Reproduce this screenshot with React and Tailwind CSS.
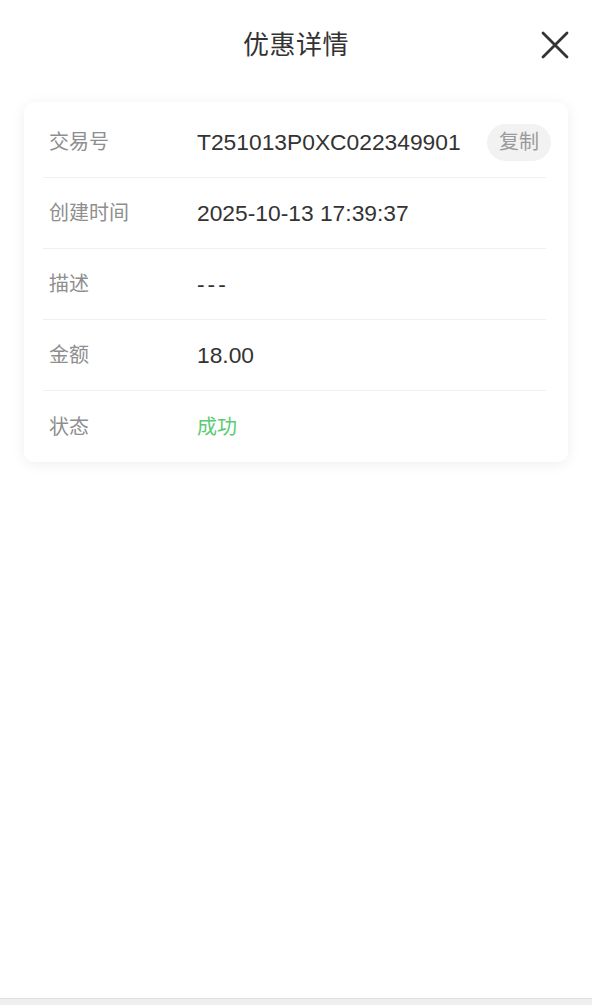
import React from 'react';

const rows = [
    { label: '交易号', value: 'T251013P0XC022349901', copy: true },
    { label: '创建时间', value: '2025-10-13 17:39:37' },
    { label: '描述', value: '---', dash: true },
    { label: '金额', value: '18.00' },
    { label: '状态', value: '成功', success: true },
];

const CloseIcon = () => (
    <svg width="28" height="28" viewBox="0 0 28 28" fill="none">
        <path d="M2 2L26 26M26 2L2 26" stroke="#333" strokeWidth="2.8" strokeLinecap="round" />
    </svg>
);

const App = () => {
    return (
        <div
            className="h-[1005px] flex flex-col bg-white"
            style={{ fontFamily: '"Liberation Sans", "Noto Sans CJK SC", sans-serif' }}
        >
            <div className="flex-1 bg-white">
                <div className="relative h-[90px] flex items-center justify-center">
                    <h1 className="text-[26px] text-[#333] tracking-[0.5px]">优惠详情</h1>
                    <button className="absolute right-[23px] top-[31px]">
                        <CloseIcon />
                    </button>
                </div>

                {/* detail card */}
                <div className="mx-[24px] mt-3 rounded-[10px] bg-white pl-[19px] pr-[22px] pt-[5px] shadow-[0_2px_14px_rgba(0,0,0,0.07)]">
                    {rows.map((row, i) => (
                        <div
                            key={row.label}
                            className={`flex h-[71px] items-center pl-[6px] ${i < rows.length - 1 ? 'border-b border-[#f0f0f0]' : ''}`}
                        >
                            <span className="w-[148px] shrink-0 text-[20px] text-[#8e8e8e]">{row.label}</span>
                            <span
                                className={
                                    row.success
                                        ? 'text-[20px] text-[#5acb72]'
                                        : row.dash
                                        ? 'text-[22.8px] text-[#333] tracking-[3px]'
                                        : 'text-[22.8px] text-[#333]'
                                }
                            >
                                {row.value}
                            </span>
                            {row.copy && (
                                <button className="ml-auto -mr-[5px] flex h-[37px] w-[64px] items-center justify-center rounded-full bg-[#f2f2f2] text-[20px] text-[#9a9a9a]">
                                    复制
                                </button>
                            )}
                        </div>
                    ))}
                </div>
            </div>
            <div className="h-[7px] border-t border-[#dedede] bg-[#efefef]" />
        </div>
    );
};

export default App;
